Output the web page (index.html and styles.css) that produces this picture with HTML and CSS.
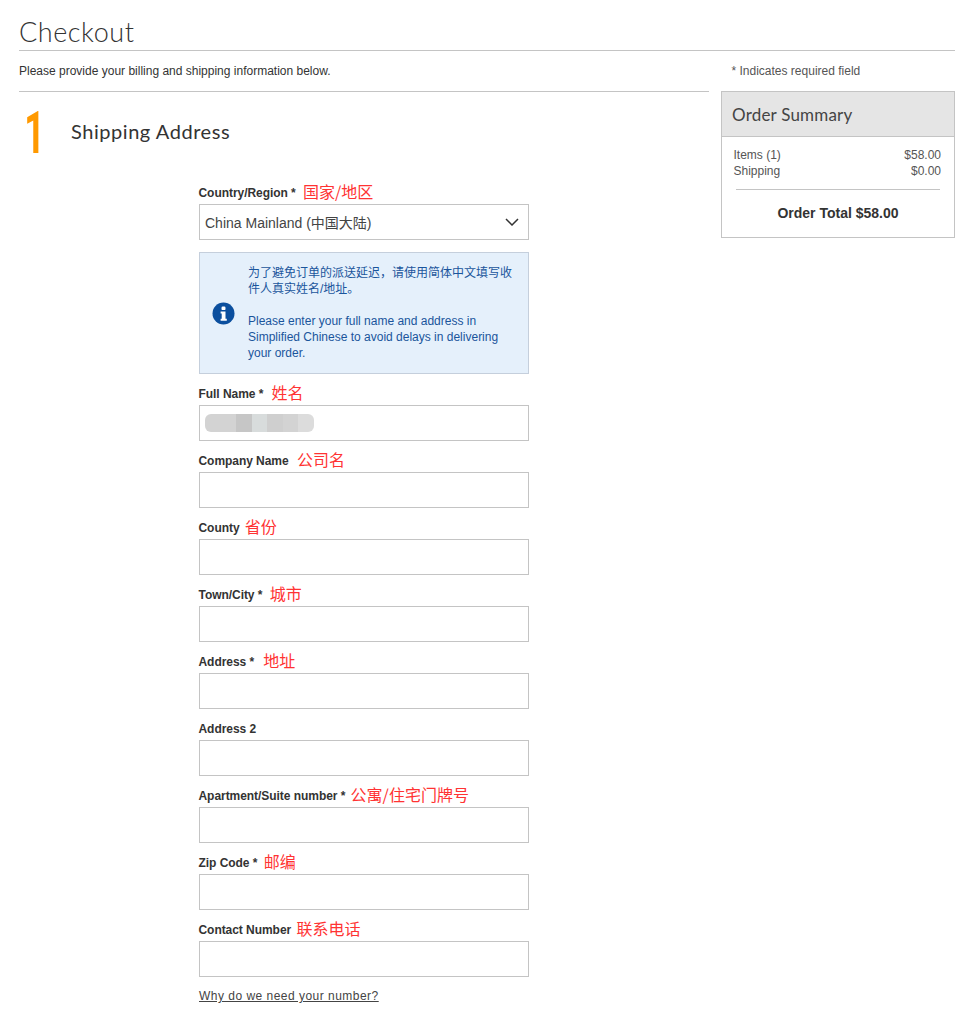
FILE: index.html
```html
<!DOCTYPE html>
<html lang="en">
<head>
<meta charset="utf-8">
<title>Checkout</title>
<link rel="stylesheet" href="styles.css">
</head>
<body>
<h1 class="page-title">Checkout</h1>
<div class="layout">
  <main class="main">
    <p class="intro">Please provide your billing and shipping information below.</p>
    <div class="step">
      <span class="step-num">1</span>
      <h2 class="step-title">Shipping Address</h2>
    </div>
    <form class="form">
      <div class="field field-first">
        <label class="label">Country/Region * <span class="note">国家/地区</span></label>
        <div class="select"><span>China Mainland (中国大陆)</span>
          <svg class="chevron" width="14" height="8" viewBox="0 0 14 8"><path d="M1 1l6 6 6-6" fill="none" stroke="#333" stroke-width="1.5"/></svg>
        </div>
      </div>
      <div class="info">
        <svg class="info-icon" width="23" height="23" viewBox="0 0 23 23"><circle cx="11.5" cy="11.5" r="11" fill="#0b4f9e"/><rect x="9.5" y="4.5" width="4" height="3.6" rx="1.2" fill="#fff"/><path d="M8.6 9.6h4.9v7.2h1.3v1.9H8.6v-1.9h1.1v-5.3H8.6z" fill="#fff"/></svg>
        <div class="info-text">
          <p>为了避免订单的派送延迟，请使用简体中文填写收件人真实姓名/地址。</p>
          <p>Please enter your full name and address in Simplified Chinese to avoid delays in delivering your order.</p>
        </div>
      </div>
      <div class="field">
        <label class="label">Full Name * <span class="note note-n">姓名</span></label>
        <div class="input"><div class="blur"><i></i><i></i><i></i><i></i><i></i><i></i><i></i></div></div>
      </div>
      <div class="field">
        <label class="label">Company Name <span class="note note-n">公司名</span></label>
        <div class="input"></div>
      </div>
      <div class="field">
        <label class="label">County <span class="note note-tight">省份</span></label>
        <div class="input"></div>
      </div>
      <div class="field">
        <label class="label">Town/City * <span class="note">城市</span></label>
        <div class="input"></div>
      </div>
      <div class="field">
        <label class="label">Address * <span class="note note-a">地址</span></label>
        <div class="input"></div>
      </div>
      <div class="field">
        <label class="label">Address 2</label>
        <div class="input"></div>
      </div>
      <div class="field">
        <label class="label">Apartment/Suite number * <span class="note note-tight">公寓/住宅门牌号</span></label>
        <div class="input"></div>
      </div>
      <div class="field">
        <label class="label">Zip Code * <span class="note note-z">邮编</span></label>
        <div class="input"></div>
      </div>
      <div class="field">
        <label class="label">Contact Number <span class="note note-tight">联系电话</span></label>
        <div class="input"></div>
      </div>
      <a class="why" href="#">Why do we need your number?</a>
    </form>
  </main>
  <aside class="side">
    <p class="required">* Indicates required field</p>
    <section class="summary">
      <h3 class="summary-title">Order Summary</h3>
      <div class="summary-body">
        <div class="row"><span>Items (1)</span><span>$58.00</span></div>
        <div class="row"><span>Shipping</span><span>$0.00</span></div>
        <div class="total">Order Total $58.00</div>
      </div>
    </section>
  </aside>
</div>
</body>
</html>
```
FILE: styles.css
```css
* { box-sizing: border-box; }
html, body { margin: 0; padding: 0; }
body {
  height: 1013px;
  overflow: hidden;
  padding: 0 19px;
  background: #fff;
  color: #333;
  font-family: "Liberation Sans", Arial, "Noto Sans CJK SC", sans-serif;
  font-size: 12px;
}
.page-title {
  margin: 0;
  height: 51px;
  padding-top: 15px;
  border-bottom: 1px solid #c4c4c4;
  font-family: "Lato", sans-serif;
  font-weight: 300;
  font-size: 27px;
  line-height: 34px;
  letter-spacing: .55px;
  color: #333;
  width: 936px;
}
.layout { display: flex; gap: 12px; width: 936px; }
.main { width: 690px; }
.intro {
  margin: 0;
  height: 41px;
  padding-top: 13px;
  line-height: 14px;
  border-bottom: 1px solid #c4c4c4;
}
.step { display: flex; height: 83px; }
.step-num {
  width: 52px;
  padding-left: 4px;
  font-size: 60px;
  line-height: 82px;
  font-weight: 700;
  color: #f90;
  font-family: "Roboto", sans-serif;
  transform: scaleX(.6);
  transform-origin: 7px 0;
}
.step-title {
  margin: 0;
  padding-top: 27px;
  font-family: "Lato", sans-serif;
  font-weight: 400;
  font-size: 20px;
  line-height: 24px;
  letter-spacing: .55px;
  color: #333;
}
.form { margin-left: 180px; width: 330px; }
.field { height: 67px; }
.field-first { height: 80px; margin-top: -2px; }
.label {
  display: flex;
  align-items: center;
  height: 31px;
  margin-left: -.5px;
  padding-top: 9px;
  font-weight: 700;
  white-space: pre;
  letter-spacing: -.05px;
}
.note {
  margin-left: 4px;
  margin-bottom: 4px;
  font-weight: 400;
  font-size: 16px;
  color: #f33;
  font-family: "Noto Sans CJK SC", sans-serif;
  letter-spacing: 0;
}
.note-n { margin-left: 5px; }
.note-tight { margin-left: 2px; }
.note-a { margin-left: 6px; }
.note-z { margin-left: 3px; }
.select, .input {
  display: flex;
  align-items: center;
  height: 36px;
  border: 1px solid #c4c4c4;
  background: #fff;
}
.select {
  justify-content: space-between;
  padding: 0 9px 0 5px;
  font-size: 14px;
  color: #444;
}
.info {
  display: flex;
  align-items: center;
  gap: 13px;
  height: 122px;
  margin-top: -1px;
  padding: 0 14px 0 12px;
  background: #e5f0fb;
  border: 1px solid #c5cfdc;
  color: #1a559c;
  line-height: 16px;
}
.info-icon { flex: none; }
.info-text p { margin: 0 0 16px; }
.info-text p:last-child { margin: 0; }
.input { padding-left: 5px; }
.blur { display: flex; height: 18px; filter: blur(.7px); border-radius: 6px; overflow: hidden; }
.blur i { width: 15.5px; background: #d3d3d3; }
.blur i:nth-child(3) { background: #c6c6c6; }
.blur i:nth-child(4) { background: #d8dcdc; }
.blur i:nth-child(5) { background: #cfcfcf; }
.blur i:nth-child(7) { background: #dcdcdc; }
.why {
  display: inline-block;
  margin-top: 12px;
  color: #444;
  letter-spacing: .48px;
  line-height: 14px;
  text-decoration: underline;
}
.side { width: 234px; }
.required {
  margin: 0;
  height: 40px;
  padding: 13px 0 0 10.5px;
  line-height: 14px;
  color: #555;
}
.summary { height: 147px; border: 1px solid #c4c4c4; }
.summary-title {
  margin: 0;
  height: 45px;
  padding-left: 10px;
  background: #e5e5e5;
  border-bottom: 1px solid #c4c4c4;
  font-family: "Lato", sans-serif;
  font-weight: 400;
  font-size: 17px;
  line-height: 45px;
  letter-spacing: .2px;
  color: #444;
}
.summary-body { padding: 10px 13px 0 11.5px; color: #555; }
.row { display: flex; justify-content: space-between; line-height: 16px; }
.total {
  margin: 10px 1px 0 2.5px;
  padding-top: 15px;
  border-top: 1px solid #c4c4c4;
  text-align: center;
  font-weight: 700;
  font-size: 14px;
  line-height: 16px;
  color: #333;
}
```
